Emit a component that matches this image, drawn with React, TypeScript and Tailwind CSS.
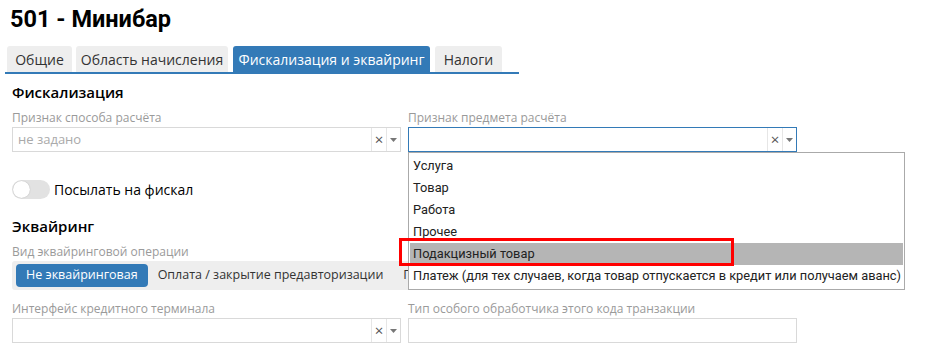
import React from "react";

const font = { fontFamily: '"Open Sans", "Noto Sans", sans-serif' };
const roboto = { fontFamily: 'Roboto, "Open Sans", sans-serif' };

function ClearArrow() {
  return (
    <div className="flex h-full items-stretch">
      <div className="flex w-[15px] items-center justify-center border-l border-[#e6e6e6] text-[15px] leading-none text-[#555]">
        ×
      </div>
      <div className="flex w-[14px] items-center justify-center border-l border-[#e6e6e6]">
        <svg width="7" height="4" viewBox="0 0 7 4">
          <path d="M0 0 L7 0 L3.5 4 Z" fill="#777" />
        </svg>
      </div>
    </div>
  );
}

function Label({ children }: { children: React.ReactNode }) {
  return <div className="h-[19px] whitespace-nowrap text-[12px] leading-[19px] text-[#9a9a9a]">{children}</div>;
}

export default function App() {
  const items = [
    "Услуга",
    "Товар",
    "Работа",
    "Прочее",
    "Подакцизный товар",
    "Платеж (для тех случаев, когда товар отпускается в кредит или получаем аванс)",
  ];
  return (
    <div className="relative h-[361px] w-[937px] overflow-hidden bg-white text-[#333]" style={font}>
      <div className="pl-[10px] pt-[4px] text-[23.5px] font-bold leading-[30px] text-black" style={roboto}>
        501 - Минибар
      </div>

      <div className="ml-[5px] mt-[12px] flex w-[514px] border-b-2 border-[#337ab7] pl-[2px]">
        <div className="flex h-[26px] w-[65px] items-center justify-center whitespace-nowrap rounded-t-[3px] bg-[#eeeeee] text-[14px]">Общие</div>
        <div className="ml-[4px] flex h-[26px] w-[152px] items-center justify-center whitespace-nowrap rounded-t-[3px] bg-[#eeeeee] text-[14px]">Область начисления</div>
        <div className="ml-[5px] flex h-[26px] w-[197px] items-center justify-center whitespace-nowrap rounded-t-[3px] bg-[#337ab7] text-[14px] text-white">Фискализация и эквайринг</div>
        <div className="ml-[5px] flex h-[26px] w-[67px] items-center justify-center whitespace-nowrap rounded-t-[3px] bg-[#eeeeee] text-[14px]">Налоги</div>
      </div>

      <div className="pl-[12px]">
        <div className="mt-[7px] text-[15px] font-semibold leading-[22px] text-black">Фискализация</div>
        <div className="mt-[5px] flex gap-[7px]">
          <div className="w-[389px]">
            <Label>Признак способа расчёта</Label>
            <div className="flex h-[25px] items-stretch border border-[#d9d9d9]">
              <div className="flex flex-1 items-center pl-[5px] text-[13px] text-[#aaa]">не задано</div>
              <ClearArrow />
            </div>
          </div>
          <div className="relative w-[389px]">
            <Label>Признак предмета расчёта</Label>
            <div className="flex h-[25px] items-stretch border border-[#337ab7]">
              <div className="flex-1" />
              <ClearArrow />
            </div>
            <div className="absolute left-0 top-[44px] z-10 w-[497px] border border-[#aaaaaa] bg-white py-[2px]" style={roboto}>
              {items.map((it, i) => (
                <div
                  key={it}
                  className={
                    "h-[22px] whitespace-nowrap text-[12.8px] leading-[22px] text-[#222] " +
                    (i === 4 ? "mx-[1px] bg-[#b5b5b5] pl-[3px]" : "pl-[4px]")
                  }
                >
                  {it}
                </div>
              ))}
            </div>
            <div className="absolute left-[-9px] top-[130px] z-20 h-[28px] w-[335px] border-[3px] border-[#ff0000]" />
          </div>
        </div>

        <div className="mt-[27px] flex items-center gap-[4px]">
          <div className="relative h-[19px] w-[38px] rounded-full bg-[#e2e2e2]">
            <div className="absolute left-[1px] top-[1px] h-[17px] w-[17px] rounded-full bg-white shadow-[0_0_1px_rgba(0,0,0,0.3)]" />
          </div>
          <div className="text-[14px] text-black">Посылать на фискал</div>
        </div>

        <div className="mt-[15px] text-[15px] font-semibold leading-[22px] text-black">Эквайринг</div>
        <div className="mt-[5px]">
          <Label>Вид эквайринговой операции</Label>
        </div>
        <div className="flex h-[29px] w-[613px] items-center gap-[10px] rounded-[3px] bg-[#eeeeee] px-[4px]">
          <div className="flex h-[23px] items-center whitespace-nowrap rounded-[4px] bg-[#337ab7] px-[10px] text-[12.5px] text-white">Не эквайринговая</div>
          <div className="whitespace-nowrap text-[12.5px]">Оплата / закрытие предавторизации</div>
          <div className="ml-[10px] whitespace-nowrap text-[12.5px]">Предавторизация</div>
        </div>

        <div className="mt-[9px] flex gap-[7px]">
          <div className="w-[389px]">
            <Label>Интерфейс кредитного терминала</Label>
            <div className="flex h-[25px] items-stretch border border-[#d9d9d9]">
              <div className="flex-1" />
              <ClearArrow />
            </div>
          </div>
          <div className="w-[389px]">
            <Label>Тип особого обработчика этого кода транзакции</Label>
            <div className="h-[25px] border border-[#d9d9d9]" />
          </div>
        </div>
      </div>
    </div>
  );
}
